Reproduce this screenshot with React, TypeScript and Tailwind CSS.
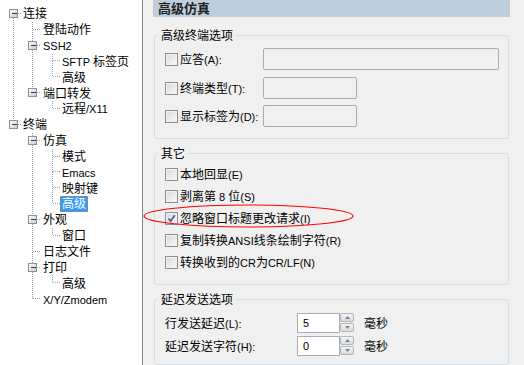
import React from "react";

const FONT = "'Liberation Sans','Noto Sans CJK SC',sans-serif";
const CJK = /[\u3000-\u9fff\uff00-\uffef]/;

function T({ s }: { s: string }) {
  const parts = s.split(/([\u3000-\u9fff\uff00-\uffef]+)/).filter(Boolean);
  return (
    <>
      {parts.map((p, i) =>
        CJK.test(p) ? (
          <span key={i} className="text-[12px]">{p}</span>
        ) : (
          <span key={i} className="text-[11px]">{p}</span>
        )
      )}
    </>
  );
}

type Item = { t: string; l: number; box?: boolean; sel?: boolean };
const tree: Item[] = [
  { t: "连接", l: 0, box: true },
  { t: "登陆动作", l: 1 },
  { t: "SSH2", l: 1, box: true },
  { t: "SFTP 标签页", l: 2 },
  { t: "高级", l: 2 },
  { t: "端口转发", l: 1, box: true },
  { t: "远程/X11", l: 2 },
  { t: "终端", l: 0, box: true },
  { t: "仿真", l: 1, box: true },
  { t: "模式", l: 2 },
  { t: "Emacs", l: 2 },
  { t: "映射键", l: 2 },
  { t: "高级", l: 2, sel: true },
  { t: "外观", l: 1, box: true },
  { t: "窗口", l: 2 },
  { t: "日志文件", l: 1 },
  { t: "打印", l: 1, box: true },
  { t: "高级", l: 2 },
  { t: "X/Y/Zmodem", l: 1 },
];

const TOP0 = 5.5;
const H = 15.85;
const LX = [13.5, 32.5, 52.5];
const TX = [23, 43, 62];
const cy = (i: number) => Math.floor(TOP0 + i * H + H / 2) + 0.5;

function TreeLines() {
  const lines: React.ReactNode[] = [];
  const boxes: React.ReactNode[] = [];
  tree.forEach((it, i) => {
    const x = LX[it.l];
    const y = cy(i);
    lines.push(<line key={"h" + i} x1={x} y1={y} x2={TX[it.l] - 2} y2={y} />);
    let next = -1;
    for (let j = i + 1; j < tree.length; j++) {
      if (tree[j].l < it.l) break;
      if (tree[j].l === it.l) {
        next = j;
        break;
      }
    }
    if (next >= 0) {
      lines.push(<line key={"v" + i} x1={x} y1={y} x2={x} y2={cy(next)} />);
    }
    if (it.l > 0 && tree[i - 1] && tree[i - 1].l === it.l - 1) {
      const top = Math.floor(TOP0 + i * H) + 0.5;
      lines.push(<line key={"f" + i} x1={x} y1={top} x2={x} y2={y} />);
    }
    if (it.box) {
      boxes.push(
        <g key={"b" + i}>
          <rect x={x - 4} y={y - 4} width={8} height={8} fill="url(#bx)" stroke="#919191" />
          <line x1={x - 2} y1={y} x2={x + 3} y2={y} stroke="#23407a" />
        </g>
      );
    }
  });
  return (
    <svg className="absolute left-0 top-0" width="142" height="365">
      <defs>
        <linearGradient id="bx" x1="0" y1="0" x2="1" y2="1">
          <stop offset="0" stopColor="#ffffff" />
          <stop offset="1" stopColor="#c9c9c9" />
        </linearGradient>
      </defs>
      <g stroke="#a0a0a0" strokeDasharray="1 1" shapeRendering="crispEdges">
        {lines}
      </g>
      <g shapeRendering="crispEdges">{boxes}</g>
    </svg>
  );
}

function Check({ checked }: { checked?: boolean }) {
  return (
    <span className="w-[13px] h-[13px] shrink-0 border border-[#8f8f8f] bg-[linear-gradient(135deg,#d6d6d6,#fbfbfb)] shadow-[inset_0_0_0_1px_#f2f2f2] flex items-center justify-center">
      {checked && (
        <svg width="11" height="11" viewBox="0 0 11 11">
          <path d="M2.5 5.5 L4.6 8.3 L8.8 2.2" fill="none" stroke="#4b5fa3" strokeWidth="1.7" />
        </svg>
      )}
    </span>
  );
}

function SpinBtn({ up }: { up?: boolean }) {
  return (
    <div className="h-[9px] border border-[#b4b4b4] rounded-[2px] bg-[linear-gradient(#f6f6f6,#dadada)] flex items-center justify-center">
      <svg width="5" height="3" viewBox="0 0 5 3">
        {up ? <path d="M0 3 L2.5 0 L5 3 Z" fill="#6a84b0" /> : <path d="M0 0 L2.5 3 L5 0 Z" fill="#6a84b0" />}
      </svg>
    </div>
  );
}

function Spin({ v, label }: { v: string; label: string }) {
  return (
    <div className="flex items-center h-[20px]">
      <div className="w-[132px] whitespace-nowrap">
        <T s={label} />
      </div>
      <div className="w-[43px] h-[20px] border border-[#abadb3] bg-white flex items-center pl-[5px]">
        <span className="text-[11px]">{v}</span>
      </div>
      <div className="w-[14px] h-[20px] flex flex-col gap-[1px]">
        <SpinBtn up />
        <SpinBtn />
      </div>
      <div className="ml-[10px]">
        <T s="毫秒" />
      </div>
    </div>
  );
}

function CheckRow({ label, checked }: { label: string; checked?: boolean }) {
  return (
    <div className="flex items-center h-[22px]">
      <Check checked={checked} />
      <span className="ml-[2px] whitespace-nowrap">
        <T s={label} />
      </span>
    </div>
  );
}

function Field({ title, body, children }: { title: string; body: string; children: React.ReactNode }) {
  return (
    <fieldset className="ml-[11px] w-[355px] border border-[#d5dfe5] rounded-[3px]">
      <legend className="ml-[3px] px-[3px] leading-[16px]">
        <T s={title} />
      </legend>
      <div className={body}>{children}</div>
    </fieldset>
  );
}

export default function App() {
  return (
    <div
      className="relative w-[524px] h-[365px] flex overflow-hidden text-black"
      style={{ fontFamily: FONT }}
    >
      {/* Tree panel */}
      <div className="relative w-[143px] h-full bg-white border-r border-[#828790]">
        <TreeLines />
        <div className="relative pt-[5.5px]">
          {tree.map((it, i) => (
            <div
              key={i}
              className="h-[15.85px] flex items-center whitespace-nowrap"
              style={{ paddingLeft: TX[it.l] - (it.sel ? 2 : 0) }}
            >
              {it.sel ? (
                <span className="bg-[#3399ff] text-white px-[2px] h-[16px] flex items-center outline outline-1 outline-dotted outline-[#c08a2a] -outline-offset-1">
                  <T s={it.t} />
                </span>
              ) : (
                <span>
                  <T s={it.t} />
                </span>
              )}
            </div>
          ))}
        </div>
      </div>

      {/* Right pane */}
      <div className="flex-1 h-full bg-[#f0f0f0] flex flex-col">
        <div className="ml-[10px] w-[357px] h-[17px] bg-[#bfcedc] flex items-center pl-[5px] text-[13px] font-bold text-[#222] shrink-0">
          高级仿真
        </div>

        <div className="mt-[10px]">
          <Field title="高级终端选项" body="pl-[10px] pt-[4px] pb-[11px]">
            <div className="flex items-center h-[22px]">
              <div className="w-[98px] flex items-center">
                <Check />
                <span className="ml-[2px] whitespace-nowrap">
                  <T s="应答(A):" />
                </span>
              </div>
              <div className="w-[236px] h-[22px] border border-[#acacac] bg-[#f0f0f0] rounded-[2px]" />
            </div>
            <div className="flex items-center h-[22px] mt-[7px]">
              <div className="w-[98px] flex items-center">
                <Check />
                <span className="ml-[2px] whitespace-nowrap">
                  <T s="终端类型(T):" />
                </span>
              </div>
              <div className="w-[94px] h-[22px] border border-[#acacac] bg-[#f0f0f0] rounded-[2px]" />
            </div>
            <div className="flex items-center h-[22px] mt-[6px]">
              <div className="w-[98px] flex items-center">
                <Check />
                <span className="ml-[2px] whitespace-nowrap">
                  <T s="显示标签为(D):" />
                </span>
              </div>
              <div className="w-[94px] h-[22px] border border-[#acacac] bg-[#f0f0f0] rounded-[2px]" />
            </div>
          </Field>
        </div>

        <div className="mt-[6px]">
          <Field title="其它" body="pl-[10px] pt-[1px] pb-[11px]">
            <CheckRow label="本地回显(E)" />
            <CheckRow label="剥离第 8 位(S)" />
            <CheckRow label="忽略窗口标题更改请求(I)" checked />
            <CheckRow label="复制转换ANSI线条绘制字符(R)" />
            <CheckRow label="转换收到的CR为CR/LF(N)" />
          </Field>
        </div>

        <div className="mt-[6px]">
          <Field title="延迟发送选项" body="pl-[10px] pt-[5px] pb-[8px]">
            <Spin label="行发送延迟(L):" v="5" />
            <div className="mt-[3px]">
              <Spin label="延迟发送字符(H):" v="0" />
            </div>
          </Field>
        </div>
      </div>

      {/* red annotation ellipse */}
      <svg className="absolute left-[143px] top-[204px]" width="211" height="24">
        <ellipse cx="105.5" cy="12" rx="104.5" ry="11" fill="none" stroke="#ff0000" strokeWidth="1.2" />
      </svg>
    </div>
  );
}
